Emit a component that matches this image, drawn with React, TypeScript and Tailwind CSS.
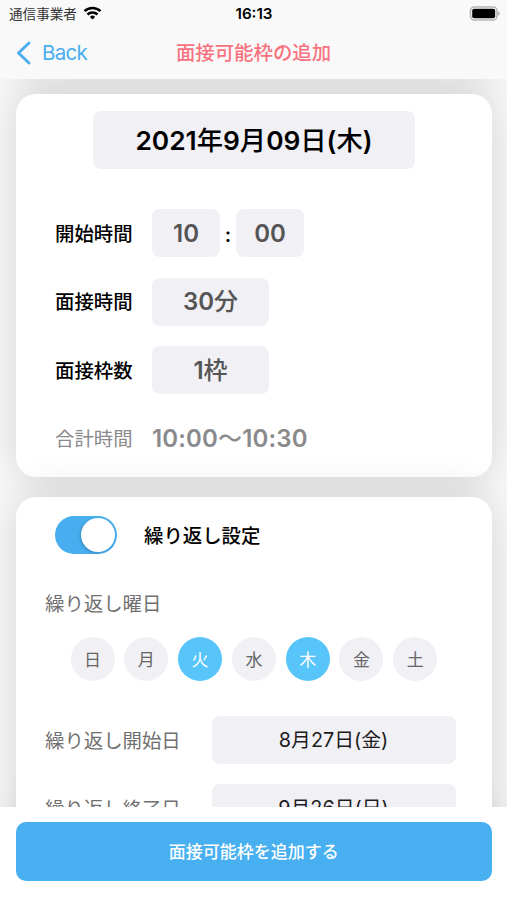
import { ReactNode } from "react"

const days = [
  { label: "日", active: false },
  { label: "月", active: false },
  { label: "火", active: true },
  { label: "水", active: false },
  { label: "木", active: true },
  { label: "金", active: false },
  { label: "土", active: false },
]

function StatusBar() {
  return (
    <div className="flex h-7 items-center justify-between pl-[9px] pr-[7px]">
      <div className="flex flex-1 items-center gap-1.5 pt-px">
        <span className="text-[13.6px] text-[#333]">通信事業者</span>
        <svg width="19" height="14" viewBox="0 0 18 14" fill="none" stroke="#000" strokeWidth="2.5" className="-mt-[3px]">
          <path d="M1 5.2a11.4 11.4 0 0 1 16 0" />
          <path d="M4 8.5a7.1 7.1 0 0 1 10 0" />
          <path d="M9 13.5 6.4 10.9a3.7 3.7 0 0 1 5.2 0z" fill="#000" stroke="none" />
        </svg>
      </div>
      <span className="-ml-px text-[15.2px] font-semibold text-black">16:13</span>
      <div className="flex flex-1 justify-end">
        <svg width="31" height="15" viewBox="0 0 31 15" className="-mt-0.5">
          <rect x="1.5" y="1" width="26.5" height="13" rx="4" fill="#fff" stroke="#b5b5b5" strokeWidth="1.6" />
          <rect x="3.2" y="2.8" width="23" height="9.4" rx="2" fill="#000" />
          <path d="M29 5.2v4.6a2.4 2.4 0 0 0 0-4.6z" fill="#b5b5b5" />
        </svg>
      </div>
    </div>
  )
}

function Header() {
  return (
    <header className="relative z-20 h-[79px] shrink-0 bg-[#f9f9f9]">
      <StatusBar />
      <div className="flex h-[49px] items-center justify-between">
        <button className="flex w-[120px] items-center gap-[11px] pl-4 text-[#4aaeee]">
          <svg width="15" height="24" viewBox="0 0 15 24" fill="none" stroke="currentColor" strokeWidth="2.9" strokeLinecap="round" strokeLinejoin="round">
            <path d="M13 2 2.5 12 13 22" />
          </svg>
          <span className="pt-0.5 text-[20.5px] tracking-[-0.7px]">Back</span>
        </button>
        <h1 className="pt-[3px] text-[19.4px] font-medium text-[#f8727f]">面接可能枠の追加</h1>
        <div className="w-[120px]" />
      </div>
    </header>
  )
}

function Field({ children, className }: { children: ReactNode; className: string }) {
  return <div className={`flex h-12 items-center justify-center rounded-lg bg-[#f1f0f5] ${className}`}>{children}</div>
}

function Row({ label, children }: { label: string; children: ReactNode }) {
  return (
    <div className="flex h-12 items-center text-2xl font-semibold text-[#555]">
      <span className="w-[97px] pt-[3px] text-[19.4px] font-medium text-black">{label}</span>
      {children}
    </div>
  )
}

export default function App() {
  return (
    <div className="flex h-[900px] w-[507px] flex-col overflow-hidden bg-[#f9f9f9] font-['Inter','Noto_Sans_CJK_JP',sans-serif] leading-none" lang="ja">
      <Header />

      <main className="relative min-h-0 flex-1 overflow-hidden pl-4 pr-[15px]">
        <div className="-mt-5 h-5 rounded-[20px] shadow-[0_0_40px_rgba(0,0,0,0.16)]" />
        <section className="mt-[15px] h-[383px] rounded-[20px] bg-white px-[39px] pt-[17px] shadow-[0_0_40px_rgba(0,0,0,0.16)]">
          <div className="mx-auto flex h-[58px] w-[322px] items-center justify-center rounded-lg bg-[#f1f0f5] pt-[3px] text-[26.3px] font-semibold text-black">
            2021<span className="font-medium">年</span>9<span className="font-medium">月</span>09<span className="font-medium">日</span>(<span className="font-medium">木</span>)
          </div>
          <div className="mt-10 flex flex-col gap-[20.5px]">
            <Row label="開始時間">
              <Field className="w-[68px] pt-0.5">10</Field>
              <span className="w-4 pt-1 text-center text-xl text-black">:</span>
              <Field className="w-[68px] pt-0.5">00</Field>
            </Row>
            <Row label="面接時間">
              <Field className="w-[117px] pt-px">30<span className="font-medium">分</span></Field>
            </Row>
            <Row label="面接枠数">
              <Field className="w-[117px] pt-px">1<span className="font-medium">枠</span></Field>
            </Row>
            <div className="flex h-12 items-center text-[#8a8a8c]">
              <span className="w-[97px] pt-[3px] text-[19.4px]">合計時間</span>
              <span className="text-2xl font-semibold tracking-[0.15px]">10:00<span className="font-medium">〜</span>10:30</span>
            </div>
          </div>
        </section>

        <section className="relative z-10 mt-5 h-[420px] rounded-[20px] bg-white pl-[29px] pr-[36.5px] pt-[19px] shadow-[0_0_40px_rgba(0,0,0,0.16)]">
          <div className="flex items-center gap-[27px] pl-[10px]">
            <div className="flex h-[38px] w-[62px] items-center justify-end rounded-full bg-[#48aeef] pr-0.5">
              <div className="size-[34px] rounded-full bg-white shadow-[-1px_1px_3px_rgba(0,0,0,0.2)]" />
            </div>
            <span className="pt-1 text-[19.4px] font-medium text-black">繰り返し設定</span>
          </div>
          <p className="mt-[41px] text-[19.4px] text-[#707070]">繰り返し曜日</p>
          <div className="mt-[23px] flex gap-[9.8px] pl-[25.5px]">
            {days.map((day) => (
              <div
                key={day.label}
                className={`flex size-11 shrink-0 items-center justify-center rounded-full pt-0.5 text-[17px] ${
                  day.active ? "bg-[#57c5fa] text-white" : "bg-[#f1f0f5] text-[#666]"
                }`}
              >
                {day.label}
              </div>
            ))}
          </div>
          <div className="mt-[34.5px] flex flex-col gap-[20.5px]">
            <div className="flex items-center justify-between text-[19.4px] text-[#707070]">
              <span className="pt-[3px]">繰り返し開始日</span>
              <Field className="w-[244px] pt-[2px] text-[19.8px] text-[#1c1c1e]">8月27日(金)</Field>
            </div>
            <div className="flex items-center justify-between text-[19.4px] text-[#707070]">
              <span className="pt-0.5">繰り返し終了日</span>
              <Field className="w-[244px] pt-px text-[19.8px] text-[#1c1c1e]">9月26日(日)</Field>
            </div>
          </div>
        </section>
        <div className="-mt-[105px] h-[105px] rounded-[20px] shadow-[0_0_40px_rgba(0,0,0,0.18)]" />
      </main>

      <footer className="relative z-20 h-[93px] shrink-0 bg-white pl-[15.5px] pr-[15px] pt-[15px]">
        <button className="h-[59px] w-full rounded-[10px] bg-[#48aff1] pt-0.5 text-[17px] font-medium text-white">面接可能枠を追加する</button>
      </footer>
    </div>
  )
}
